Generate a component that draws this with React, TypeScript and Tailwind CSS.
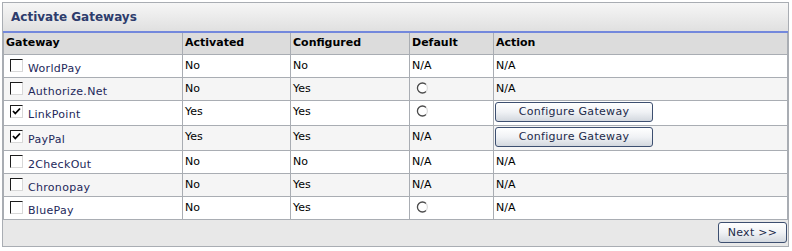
import React, { useState } from "react";

type Gateway = {
  name: string;
  checked: boolean;
  activated: string;
  configured: string;
  defaultCell: "na" | "radio";
  configure: boolean;
};

const gateways: Gateway[] = [
  { name: "WorldPay", checked: false, activated: "No", configured: "No", defaultCell: "na", configure: false },
  { name: "Authorize.Net", checked: false, activated: "No", configured: "Yes", defaultCell: "radio", configure: false },
  { name: "LinkPoint", checked: true, activated: "Yes", configured: "Yes", defaultCell: "radio", configure: true },
  { name: "PayPal", checked: true, activated: "Yes", configured: "Yes", defaultCell: "na", configure: true },
  { name: "2CheckOut", checked: false, activated: "No", configured: "No", defaultCell: "na", configure: false },
  { name: "Chronopay", checked: false, activated: "No", configured: "Yes", defaultCell: "na", configure: false },
  { name: "BluePay", checked: false, activated: "No", configured: "Yes", defaultCell: "radio", configure: false },
];

function Checkbox({ checked }: { checked: boolean }) {
  return (
    <span className="relative inline-block h-[13px] w-[13px] shrink-0 border border-[#1c1c1c] border-r-[#d8d8d8] border-b-[#d8d8d8] bg-white">
      {checked && (
        <svg viewBox="0 0 11 11" className="absolute left-0 top-0 h-[11px] w-[11px]">
          <path d="M2 5 L4.3 7.5 L9 2.5" fill="none" stroke="#000" strokeWidth="1.8" />
        </svg>
      )}
    </span>
  );
}

function Radio() {
  return (
    <svg viewBox="0 0 12 12" className="ml-[4px] block h-[12px] w-[12px]">
      <circle cx="6" cy="6" r="5.5" fill="#fff" />
      <path d="M10 2.5 A5 5 0 1 0 10 9.5" fill="none" stroke="#4a4a4a" strokeWidth="1.3" />
      <path d="M10 9.5 A5 5 0 0 0 10 2.5" fill="none" stroke="#dcdcdc" strokeWidth="1.2" />
    </svg>
  );
}

function Button({ children, className }: { children: React.ReactNode; className?: string }) {
  return (
    <button
      type="button"
      className={
        "rounded-[3px] border border-[#3d4f70] bg-gradient-to-b from-[#ffffff] via-[#f0f2f5] to-[#d3d8df] text-[11px] tracking-[0.3px] text-[#1c2a4a] " +
        (className || "")
      }
    >
      {children}
    </button>
  );
}

export default function App() {
  const [rows] = useState(gateways);
  const cell = "border border-[#a9adb3] px-[2px] align-top";

  return (
    <div className="h-[251px] w-[792px] bg-white pl-[2px] pt-[2px] font-['DejaVu_Sans',Verdana,sans-serif] text-[11px] leading-[14px] text-black">
      <div className="w-[787px] border border-[#a9adb3]">
        <div className="flex h-[30px] items-center border-b-[2px] border-[#7388dc] bg-gradient-to-b from-[#f6f6f6] to-[#e0e0e0] pl-[8px]">
          <span className="text-[12px] font-bold text-[#2d3c6c]">Activate Gateways</span>
        </div>
        <table className="w-full border-collapse">
          <thead>
            <tr className="h-[21px] bg-[#dcdcdc] text-left font-bold">
              <th className="w-[179px] border-x border-b border-[#a9adb3] px-[2px] align-middle">Gateway</th>
              <th className="w-[108px] border-x border-b border-[#a9adb3] px-[2px] align-middle">Activated</th>
              <th className="w-[119px] border-x border-b border-[#a9adb3] px-[2px] align-middle">Configured</th>
              <th className="w-[84px] border-x border-b border-[#a9adb3] px-[2px] align-middle">Default</th>
              <th className="border-x border-b border-[#a9adb3] px-[2px] align-middle">Action</th>
            </tr>
          </thead>
          <tbody>
            {rows.map((g, i) => (
              <tr
                key={g.name}
                className={(g.configure ? "h-[25px] " : "h-[23px] ") + (i % 2 === 1 ? "bg-[#f5f5f5]" : "bg-white")}
              >
                <td className="border border-[#a9adb3] pl-[6px] align-top">
                  <div className="flex items-start gap-[5px] pt-[4px]">
                    <Checkbox checked={g.checked} />
                    <span className="mt-[3px] tracking-[0.3px] text-[#23285a]">{g.name}</span>
                  </div>
                </td>
                <td className={cell + " pt-[4px]"}>{g.activated}</td>
                <td className={cell + " pt-[4px]"}>{g.configured}</td>
                <td className={cell + " pt-[4px]"}>{g.defaultCell === "radio" ? <Radio /> : "N/A"}</td>
                <td className={cell + (g.configure ? " pl-[1px] pt-[1px]" : " pt-[4px]")}>
                  {g.configure ? (
                    <Button className="h-[20px] w-[158px]">Configure Gateway</Button>
                  ) : (
                    "N/A"
                  )}
                </td>
              </tr>
            ))}
          </tbody>
        </table>
        <div className="flex h-[26px] items-center justify-end bg-[#e8e8e8] pr-[1px]">
          <Button className="h-[21px] w-[69px]">Next &gt;&gt;</Button>
        </div>
      </div>
    </div>
  );
}
